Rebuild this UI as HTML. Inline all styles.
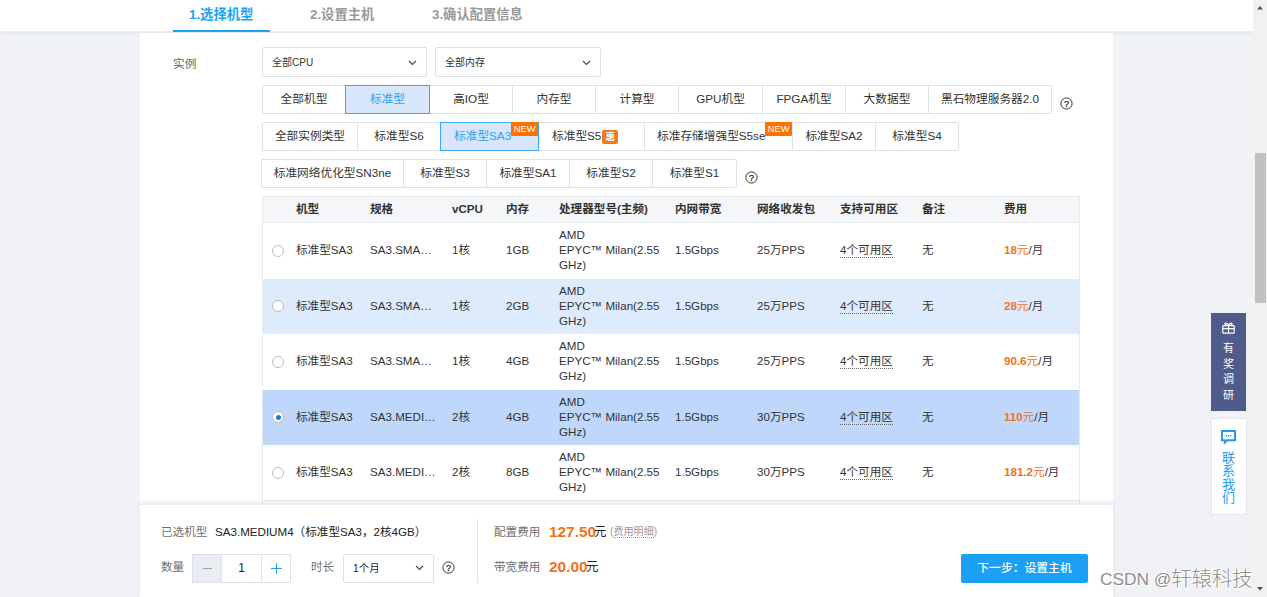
<!DOCTYPE html>
<html lang="zh-CN">
<head>
<meta charset="utf-8">
<title>选择机型</title>
<style>
*{box-sizing:border-box;margin:0;padding:0}
html,body{width:1267px;height:597px;overflow:hidden}
body{position:relative;background:#f1f2f6;font-family:"Liberation Sans","Noto Sans CJK SC",sans-serif;font-size:11.5px;color:#333}
.abs{position:absolute}
#topbar{left:0;top:0;width:1253px;height:32px;background:#fff;border-bottom:1px solid #e9edf3;box-shadow:0 1px 3px rgba(210,218,232,.6)}
.tab{position:absolute;top:6px;font-weight:bold;font-size:13.3px;color:#999;white-space:nowrap;line-height:18px}
.tab.on{color:#1aa3f5}
#uline{left:173px;top:30px;width:97px;height:2px;background:#1aa3f5}
#panel{left:140px;top:33px;width:973px;height:480px;background:#fff}
#scroll{left:1253px;top:0;width:14px;height:597px;background:#f1f1f1}
#thumb{left:1255px;top:153px;width:11px;height:150px;background:#c1c1c1}
.lbl{left:173px;top:56px;font-size:11.7px;color:#666;line-height:16px}
.sel{top:47px;height:30px;border:1px solid #dde0e7;border-radius:2px;background:#fff;font-size:10px;line-height:29px;padding-left:9px;color:#333}
.sel svg{position:absolute;right:9px;top:12px}
.seg{left:262px;height:29px;display:flex;font-size:11.7px;color:#333;white-space:nowrap}
.seg div{height:29px;line-height:25.6px;text-align:center;border:1px solid #dde0e7;border-left:none;background:#fff;position:relative}
.seg div:first-child{border-left:1px solid #dde0e7;border-radius:2px 0 0 2px}.seg div:last-child{border-radius:0 2px 2px 0}
.seg div.on{background:#d8e6fa;border:1px solid #3aa6f5;color:#2ea0f2;margin-left:-1px;z-index:2}
.new{position:absolute;right:0;top:-1px;background:#ff7200;color:#fff;font-size:9.4px;line-height:14px;height:14px;padding:0 2.5px;letter-spacing:0;border-radius:1px}
.hui{display:inline-block;vertical-align:middle;background:#ee7a1a;color:#fff;font-size:9.5px;font-weight:bold;width:16px;height:14px;line-height:14px;text-align:center;margin:1px 0 0 1px;border-radius:2px}
.help{width:13px;height:13px}
table{border-collapse:collapse;table-layout:fixed}
#tbl{left:262px;top:196px;width:818px;border:1px solid #e6e9ee;border-bottom:none;height:310px;overflow:hidden}
#tbl .hd{height:26px;background:#f5f6f8;border-bottom:1px solid #e6e9ee;position:relative;font-weight:bold;font-size:11.6px;color:#333}
#tbl .hd span{position:absolute;top:4px;line-height:16px;white-space:nowrap}
.row{height:55.5px;position:relative;font-size:11.6px;color:#333}
.row.alt{background:#deebfd}
.row.sel2{background:#bfd7fa}
.row span{position:absolute;white-space:nowrap;line-height:15px;top:19px}
.row .proc{top:4px;white-space:normal;width:110px;line-height:15px}
.radio{position:absolute;left:9px;top:21.5px;width:12px;height:12px;border-radius:50%;border:1px solid #bdbdbd;background:#fff}
.radio.on::after{content:"";position:absolute;left:2.5px;top:2.5px;width:5px;height:5px;border-radius:50%;background:#1a78d6}
.zone{border-bottom:1px dotted #666;line-height:14px}
.pr b{color:#f0731c}
.pr i{font-style:normal;color:#f0731c}
#bottom{left:140px;top:504px;width:973px;height:93px;background:#fff;border-top:1px solid #e9ecf1;box-shadow:0 -2px 4px rgba(190,200,215,.4)}
#bottom span{position:absolute;white-space:nowrap}

#bottom span,#bottom div{position:absolute;white-space:nowrap}
.bl{font-size:11.6px;color:#707070;line-height:16px}
.bv{font-size:11.6px;color:#222;line-height:16px}
.step{top:49px;height:29px;border:1px solid #dde0e7;background:#fff;text-align:center;line-height:27px;font-size:12px;color:#222}
.amt{font-size:15.4px;font-weight:bold;color:#f0731c;line-height:20px}
.yuan{font-size:12.4px;color:#222;line-height:20px}
#next{left:821px;top:49px;width:127px;height:29px;background:#1ba0f5;border-radius:2px;color:#fff;font-weight:500;font-size:11.8px;line-height:29px;text-align:center}
#w1{left:1211px;top:313px;width:35px;height:98px;background:#4f5b8a;color:#fff;font-size:11px;line-height:15.6px;text-align:center}
#w2{left:1211px;top:418px;width:36px;height:97px;background:#fff;border:1px solid #e1e5ec;color:#1c9cf5;font-size:13px;line-height:13.4px;text-align:center}
#wm{left:1100px;top:566px;font-size:17.3px;line-height:24px;color:#8d8d8d;white-space:nowrap;text-shadow:0 0 1px #fff,1px 1px 0 #fff,-1px -1px 0 #fff;font-weight:300}
#wm span{font-size:20.3px;position:relative;top:0.6px}
</style>
</head>
<body>
<div id="topbar" class="abs">
  <div class="tab on" style="left:189px">1.选择机型</div>
  <div class="tab" style="left:310px">2.设置主机</div>
  <div class="tab" style="left:432px">3.确认配置信息</div>
</div>
<div id="uline" class="abs"></div>
<div id="panel" class="abs"></div>
<div class="abs lbl">实例</div>
<div class="abs sel" style="left:262px;width:165px">全部CPU<svg width="9" height="6" viewBox="0 0 9 6"><path d="M1 1l3.5 3.5L8 1" fill="none" stroke="#4a4a4a" stroke-width="1.15"/></svg></div>
<div class="abs sel" style="left:435px;width:166px">全部内存<svg width="9" height="6" viewBox="0 0 9 6"><path d="M1 1l3.5 3.5L8 1" fill="none" stroke="#4a4a4a" stroke-width="1.15"/></svg></div>

<div class="abs seg" style="top:85px">
  <div style="width:84px">全部机型</div><div class="on" style="width:85px">标准型</div><div style="width:83px">高IO型</div><div style="width:83px">内存型</div><div style="width:83px">计算型</div><div style="width:84px">GPU机型</div><div style="width:83px">FPGA机型</div><div style="width:83px">大数据型</div><div style="width:123px">黑石物理服务器2.0</div>
</div>
<svg class="abs help" style="left:1060px;top:97px" viewBox="0 0 13 13"><circle cx="6.5" cy="6.5" r="5.6" fill="none" stroke="#333" stroke-width="1"/><text x="6.5" y="9.7" font-size="9" text-anchor="middle" fill="#222" stroke="#222" stroke-width="0.25" font-family="Liberation Sans,sans-serif">?</text></svg>

<div class="abs seg" style="top:122px">
  <div style="width:96px">全部实例类型</div><div style="width:83px">标准型S6</div><div class="on" style="width:99px;text-align:left;padding-left:13px">标准型SA3<span class="new">NEW</span></div><div style="width:106px;text-align:left;padding-left:13px">标准型S5<span class="hui">惠</span></div><div style="width:148px;text-align:left;padding-left:12px">标准存储增强型S5se<span class="new">NEW</span></div><div style="width:83px">标准型SA2</div><div style="width:83px">标准型S4</div>
</div>

<div class="abs seg" style="top:159px;left:261px">
  <div style="width:143px">标准网络优化型SN3ne</div><div style="width:83px">标准型S3</div><div style="width:83px">标准型SA1</div><div style="width:83px">标准型S2</div><div style="width:84px">标准型S1</div>
</div>
<svg class="abs help" style="left:745px;top:171px" viewBox="0 0 13 13"><circle cx="6.5" cy="6.5" r="5.6" fill="none" stroke="#333" stroke-width="1"/><text x="6.5" y="9.7" font-size="9" text-anchor="middle" fill="#222" stroke="#222" stroke-width="0.25" font-family="Liberation Sans,sans-serif">?</text></svg>

<div id="tbl" class="abs">
  <div class="hd"><span style="left:33px">机型</span><span style="left:107px">规格</span><span style="left:189px">vCPU</span><span style="left:243px">内存</span><span style="left:296px">处理器型号(主频)</span><span style="left:412px">内网带宽</span><span style="left:494px">网络收发包</span><span style="left:577px">支持可用区</span><span style="left:659px">备注</span><span style="left:741px">费用</span></div>
  <div class="row"><i class="radio"></i><span style="left:33px">标准型SA3</span><span style="left:107px">SA3.SMA…</span><span style="left:189px">1核</span><span style="left:243px">1GB</span><span class="proc" style="left:296px">AMD<br>EPYC™ Milan(2.55<br>GHz)</span><span style="left:412px">1.5Gbps</span><span style="left:494px">25万PPS</span><span style="left:577px" class="zone">4个可用区</span><span style="left:659px">无</span><span style="left:741px" class="pr"><b>18</b><i>元</i>/月</span></div>
  <div class="row alt"><i class="radio"></i><span style="left:33px">标准型SA3</span><span style="left:107px">SA3.SMA…</span><span style="left:189px">1核</span><span style="left:243px">2GB</span><span class="proc" style="left:296px">AMD<br>EPYC™ Milan(2.55<br>GHz)</span><span style="left:412px">1.5Gbps</span><span style="left:494px">25万PPS</span><span style="left:577px" class="zone">4个可用区</span><span style="left:659px">无</span><span style="left:741px" class="pr"><b>28</b><i>元</i>/月</span></div>
  <div class="row"><i class="radio"></i><span style="left:33px">标准型SA3</span><span style="left:107px">SA3.SMA…</span><span style="left:189px">1核</span><span style="left:243px">4GB</span><span class="proc" style="left:296px">AMD<br>EPYC™ Milan(2.55<br>GHz)</span><span style="left:412px">1.5Gbps</span><span style="left:494px">25万PPS</span><span style="left:577px" class="zone">4个可用区</span><span style="left:659px">无</span><span style="left:741px" class="pr"><b>90.6</b><i>元</i>/月</span></div>
  <div class="row sel2"><i class="radio on"></i><span style="left:33px">标准型SA3</span><span style="left:107px">SA3.MEDI…</span><span style="left:189px">2核</span><span style="left:243px">4GB</span><span class="proc" style="left:296px">AMD<br>EPYC™ Milan(2.55<br>GHz)</span><span style="left:412px">1.5Gbps</span><span style="left:494px">30万PPS</span><span style="left:577px" class="zone">4个可用区</span><span style="left:659px">无</span><span style="left:741px" class="pr"><b>110</b><i>元</i>/月</span></div>
  <div class="row" style="border-bottom:1px solid #e6e9ee"><i class="radio"></i><span style="left:33px">标准型SA3</span><span style="left:107px">SA3.MEDI…</span><span style="left:189px">2核</span><span style="left:243px">8GB</span><span class="proc" style="left:296px">AMD<br>EPYC™ Milan(2.55<br>GHz)</span><span style="left:412px">1.5Gbps</span><span style="left:494px">30万PPS</span><span style="left:577px" class="zone">4个可用区</span><span style="left:659px">无</span><span style="left:741px" class="pr"><b>181.2</b><i>元</i>/月</span></div>
</div>

<div id="bottom" class="abs">
  <span class="bl" style="left:21px;top:19px">已选机型</span>
  <span class="bv" style="left:75px;top:19px">SA3.MEDIUM4（标准型SA3，2核4GB）</span>
  <span class="bl" style="left:21px;top:54px">数量</span>
  <div class="step" style="left:52px;width:30px;background:#e9ecf3;color:#999">
    <svg width="9" height="9" viewBox="0 0 9 9" style="position:absolute;left:10px;top:9px"><path d="M0 4.5h9" stroke="#9aa0ad" stroke-width="1"/></svg></div>
  <div class="step" style="left:81px;width:41px">1</div>
  <div class="step" style="left:121px;width:30px">
    <svg width="11" height="11" viewBox="0 0 11 11" style="position:absolute;left:9px;top:8px"><path d="M0 5.5h11M5.5 0v11" stroke="#2a9cf0" stroke-width="1"/></svg></div>
  <span class="bl" style="left:171px;top:54px">时长</span>
  <div class="step" style="left:203px;width:91px;text-align:left;padding-left:9px;font-size:10.4px;border-radius:2px">1个月<span style="right:9px;top:-1px"><svg width="9" height="6" viewBox="0 0 9 6"><path d="M1 1l3.5 3.5L8 1" fill="none" stroke="#4a4a4a" stroke-width="1.15"/></svg></span></div>
  <svg class="abs help" style="left:302px;top:56px" viewBox="0 0 13 13"><circle cx="6.5" cy="6.5" r="5.6" fill="none" stroke="#333" stroke-width="1"/><text x="6.5" y="9.7" font-size="9" text-anchor="middle" fill="#222" stroke="#222" stroke-width="0.25" font-family="Liberation Sans,sans-serif">?</text></svg>
  <div style="left:337px;top:14px;width:1px;height:64px;background:#e5e5e5"></div>
  <span class="bl" style="left:354px;top:19px">配置费用</span>
  <span class="amt" style="left:409px;top:17px">127.50</span>
  <span class="yuan" style="left:454px;top:17px">元</span>
  <span style="left:470px;top:20px;font-size:10.1px;color:#999;line-height:14px">(<span style="position:static;border-bottom:1px dotted #999">费用明细</span>)</span>
  <span class="bl" style="left:354px;top:54px">带宽费用</span>
  <span class="amt" style="left:409px;top:52px">20.00</span>
  <span class="yuan" style="left:446px;top:52px">元</span>
  <div id="next">下一步：设置主机</div>
</div>
<div id="w1" class="abs">
  <svg width="13" height="12" viewBox="0 0 13 12" style="position:absolute;left:11px;top:9px"><g fill="none" stroke="#fff" stroke-width="1.2"><rect x="0.8" y="3.6" width="11.4" height="7.6" rx="0.8"/><path d="M6.5 3.6v7.6M0.8 6.6h11.4M6.5 3.4C5 0.4 2.4 0.8 3 2.4 3.4 3.4 5 3.4 6.5 3.4zM6.5 3.4C8 0.4 10.6 0.8 10 2.4 9.6 3.4 8 3.4 6.5 3.4z"/></g></svg>
  <div style="position:absolute;left:0;top:28px;width:35px">有<br>奖<br>调<br>研</div>
</div>
<div id="w2" class="abs">
  <svg width="15" height="14" viewBox="0 0 16 15" style="position:absolute;left:9px;top:11px"><path d="M1 1h14v10H6.5L4 13.5V11H1z" fill="none" stroke="#1c9cf5" stroke-width="2.1"/><rect x="5" y="5.3" width="1.5" height="1.5" fill="#1c9cf5"/><rect x="7.3" y="5.3" width="1.5" height="1.5" fill="#1c9cf5"/><rect x="9.6" y="5.3" width="1.5" height="1.5" fill="#1c9cf5"/></svg>
  <div style="position:absolute;left:-1px;top:32px;width:35px">联<br>系<br>我<br>们</div>
</div>
<div id="wm" class="abs">CSDN @<span>轩辕科技</span></div>
<div id="scroll" class="abs"></div>
<div id="thumb" class="abs"></div>
<svg class="abs" style="left:1257px;top:6px" width="6" height="3.5" viewBox="0 0 7 4"><path d="M0 4L3.5 0 7 4z" fill="#505050"/></svg>
<svg class="abs" style="left:1257px;top:587px" width="6" height="3.5" viewBox="0 0 7 4"><path d="M0 0L3.5 4 7 0z" fill="#505050"/></svg>
</body>
</html>
